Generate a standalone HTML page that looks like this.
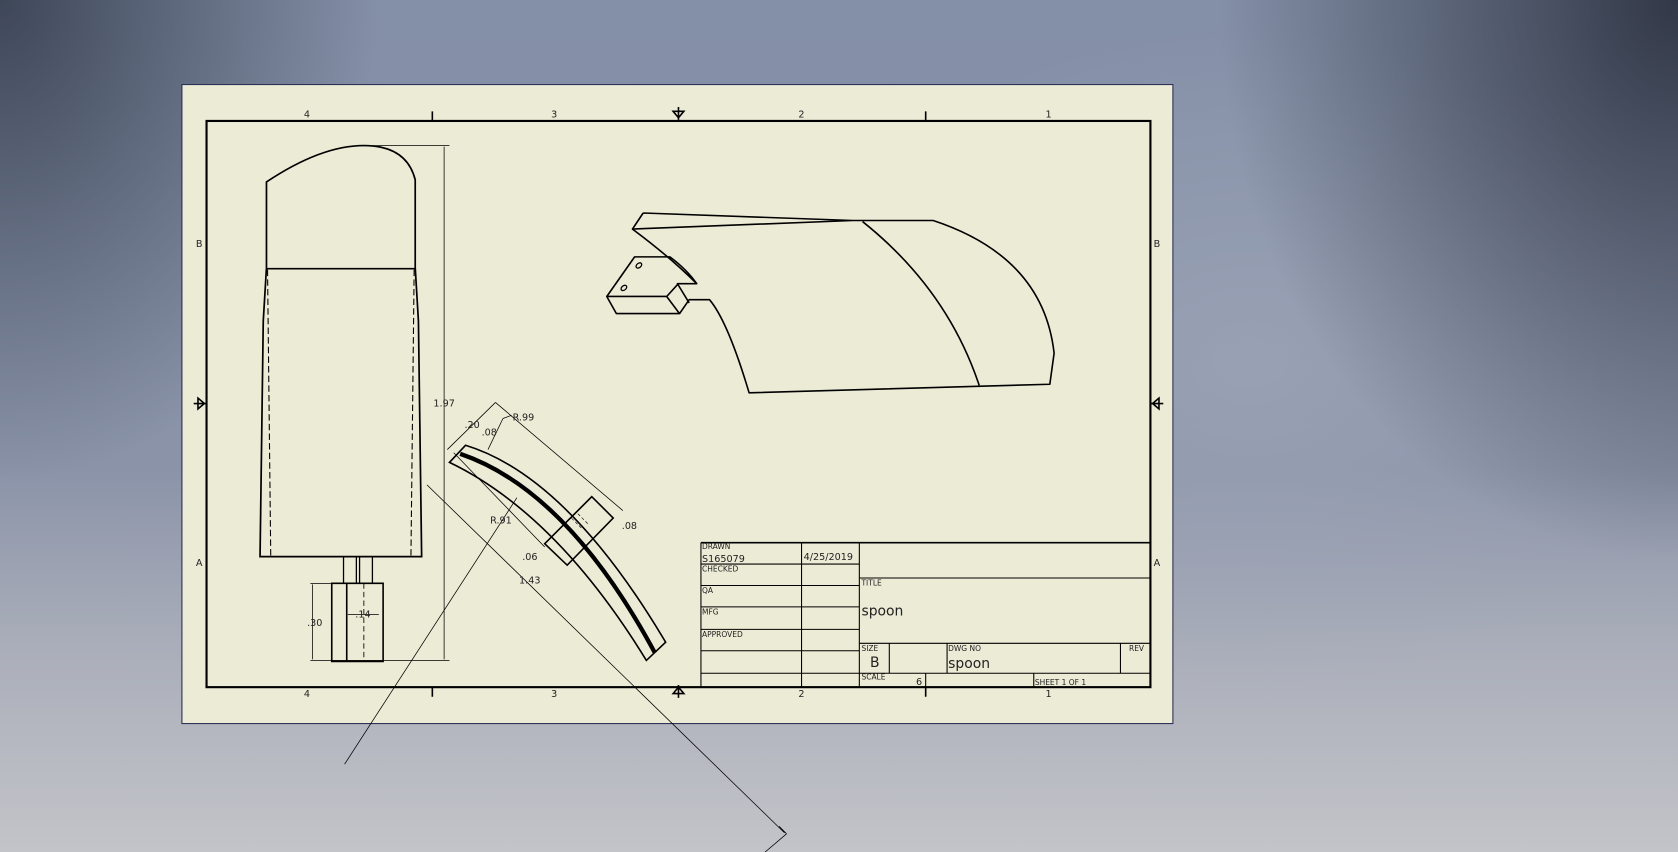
<!DOCTYPE html>
<html><head><meta charset="utf-8"><style>
html,body{margin:0;padding:0;width:1678px;height:852px;overflow:hidden}
body{background:
radial-gradient(ellipse 460px 560px at 1678px 0px, rgba(40,46,60,0.9), rgba(40,46,60,0) 100%),
radial-gradient(ellipse 380px 480px at 0px 0px, rgba(50,58,74,0.85), rgba(50,58,74,0) 100%),
radial-gradient(ellipse 450px 330px at 1250px 360px, rgba(158,166,184,0.75), rgba(158,166,184,0) 100%),
linear-gradient(180deg,#8490a8 0%,#8a93a8 55%,#a9adb9 75%,#c3c4c9 100%);}
svg{position:absolute;left:0;top:0}
text{font-family:"DejaVu Sans","Liberation Sans",sans-serif;fill:#222}
</style></head><body>
<svg width="1678" height="852" viewBox="0 0 1568 796" preserveAspectRatio="none">
<rect x="170" y="79" width="926" height="597" fill="#ecebd6" stroke="#2a2f55" stroke-width="1"/>
<g fill="none" stroke="#000">
<rect x="193" y="113" width="882" height="529" stroke-width="2"/>
<path d="M404 104V113M865 104V113M404 642V651M865 642V651" stroke-width="1.5"/>
<path d="M634 100V112M629 104L634 110L639 104Z M634 652V640M629 648L634 642L639 648Z M181 377H193M185 372L191 377L185 382Z M1087 377H1075M1083 372L1077 377L1083 382Z" stroke-width="1.5"/>
<path d="M655 507H1075M655 507V642M749 507V642M803 507V642M655 527H803M655 547H803M655 567H803M655 588H803M655 608H803M655 629H1075M803 540H1075M803 601H1075M831 601V629M885 601V629M1047 601V629M865 629V642M966 629V642" stroke-width="1"/>
<path d="M655 507H1075" stroke-width="1.5"/>
<path d="M249 170Q300 136 340 136Q380 136 388 168V250L391 300L394 520H243L246 300L249 250Z" stroke-width="1.6"/>
<path d="M249 251H388" stroke-width="1.5"/>
<path d="M250 252L253 520M387 252L384 520" stroke-width="1" stroke-dasharray="6 3"/>
<path d="M321 520V545M333 520V545M336 520V545M348 520V545" stroke-width="1.2"/>
<path d="M310 545H358V618H310ZM324 545V618" stroke-width="1.5"/>
<path d="M340 545V618" stroke-width="0.8" stroke-dasharray="5 3"/>
<path d="M341 136H420M415 137V616M290 545H310M290 617H420M292 546V616M325 574H354" stroke-width="0.7"/>
<path d="M435 416Q530 445 622 600L604 617Q520 480 420 432Z" stroke-width="1.5"/>
<path d="M430 424Q530 458 612 610" stroke-width="4"/>
<path d="M553 464L573 484L530 528L509 508Z" stroke-width="1.5"/>
<path d="M534 484L544 494M540 480L550 490" stroke-width="0.6" stroke-dasharray="3 2"/>
<path d="M463 376L582 477M463 376L418 420M399 453L733 778M728 772L735 779M424 423L509 511M483 465L322 714M470 391L456 420M470 391L478 388M735 779L715 796" stroke-width="0.7"/>
<path d="M601 199L591 214L797 206L872 206Q975 240 985 330L981 359L700 367Q680 300 663 280H644L635 293H576L567 277L593 240H626Q642 252 651 265H633L644 283M601 199L797 206M591 214Q626 240 651 265M567 277H623L635 293M623 277L633 266" stroke-width="1.5" stroke-linejoin="round"/>
<path d="M806 207Q885 270 915 360" stroke-width="1.5"/>
<ellipse cx="597" cy="248" rx="3" ry="2" transform="rotate(-40 597 248)" stroke-width="1.2"/>
<ellipse cx="583" cy="269" rx="3" ry="2" transform="rotate(-40 583 269)" stroke-width="1.2"/>
</g>
<g font-size="9">
<text x="284" y="110">4</text><text x="515" y="110">3</text><text x="746" y="110">2</text><text x="977" y="110">1</text>
<text x="284" y="651">4</text><text x="515" y="651">3</text><text x="746" y="651">2</text><text x="977" y="651">1</text>
<text x="183" y="231">B</text><text x="1078" y="231">B</text><text x="183" y="529">A</text><text x="1078" y="529">A</text>
<text x="405" y="380">1.97</text><text x="479" y="393">R.99</text><text x="434" y="400">.20</text><text x="450" y="407">.08</text>
<text x="458" y="489">R.91</text><text x="581" y="494">.08</text><text x="488" y="523">.06</text><text x="485" y="545">1.43</text>
<text x="287" y="585">.30</text><text x="332" y="577">.14</text>
</g>
<g font-size="7">
<text x="656" y="513">DRAWN</text><text x="656" y="534">CHECKED</text><text x="656" y="554">QA</text><text x="656" y="574">MFG</text><text x="656" y="595">APPROVED</text>
<text x="805" y="547">TITLE</text><text x="805" y="608">SIZE</text><text x="886" y="608">DWG NO</text><text x="1055" y="608">REV</text><text x="805" y="635">SCALE</text><text x="967" y="640">SHEET 1  OF 1</text>
</g>
<g font-size="9"><text x="656" y="525">S165079</text><text x="751" y="523">4/25/2019</text><text x="856" y="640">6</text></g>
<text x="805" y="575" font-size="13">spoon</text>
<text x="813" y="623" font-size="13">B</text>
<text x="886" y="624" font-size="13">spoon</text>
</svg>
</body></html>
